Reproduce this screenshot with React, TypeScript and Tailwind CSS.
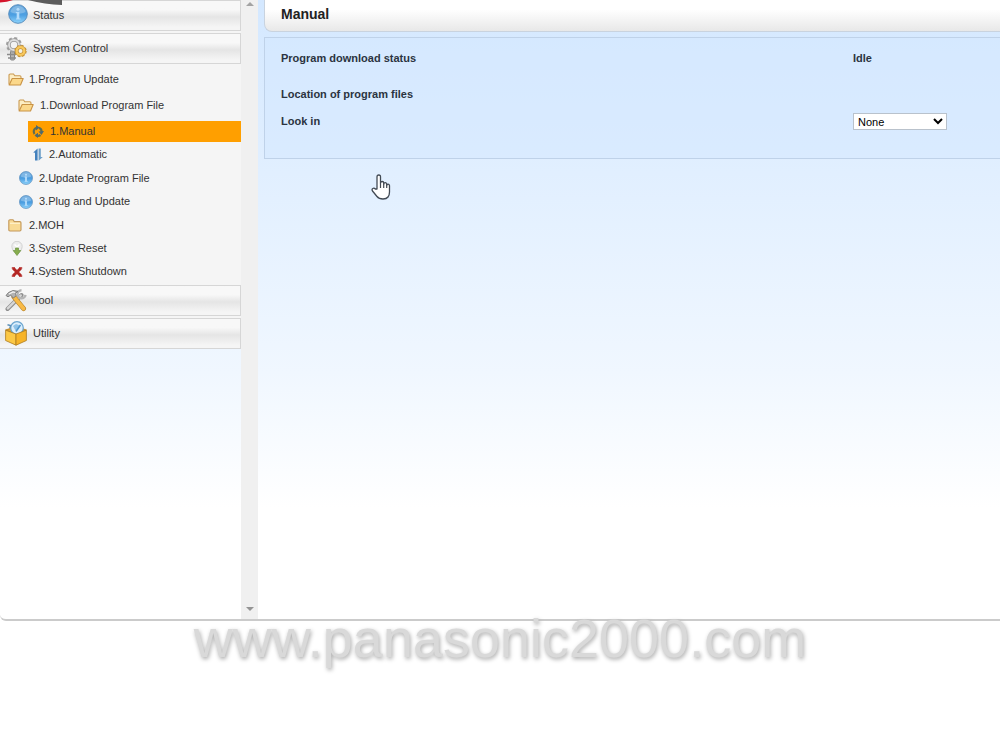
import type { ReactNode } from "react";

function InfoIcon({ id, className }: { id: string; className: string }) {
  return (
    <svg viewBox="0 0 20 20" className={className} aria-hidden="true">
      <defs>
        <linearGradient id={id} x1="0" y1="0" x2="0" y2="1">
          <stop offset="0" stopColor="#5b9fd8" />
          <stop offset="0.55" stopColor="#4c9fe2" />
          <stop offset="1" stopColor="#8fd4fb" />
        </linearGradient>
      </defs>
      <circle cx="10" cy="10" r="9.3" fill={`url(#${id})`} stroke="#5b8fbe" strokeWidth="1" />
      <path d="M2.5 8a7.6 7.6 0 0 1 15 0c-4 2-11 2-15 0z" fill="#fff" opacity="0.25" />
      <path d="M10 8v7" stroke="#b5dcfb" strokeWidth="2.6" fill="none" />
      <path d="M7.8 8.5h2M8 15h4.5" stroke="#b5dcfb" strokeWidth="1" />
      <circle cx="10" cy="5.3" r="1.5" fill="#b5dcfb" />
    </svg>
  );
}

function GearsIcon() {
  return (
    <svg viewBox="0 0 22 24" className="h-6 w-[22px]" aria-hidden="true">
      <rect x="5.5" y="14" width="4" height="9" rx="1" fill="#b5b5b5" stroke="#858585" />
      <path d="M2 17.5h9M3 21h8" stroke="#8b8b8b" strokeWidth="1.5" />
      <circle cx="9" cy="8" r="7" fill="none" stroke="#a0a0a0" strokeWidth="2" strokeDasharray="3 2.5" />
      <circle cx="9" cy="8" r="5" fill="#f3f3f3" stroke="#999" strokeWidth="3.4" />
      <circle cx="9" cy="8" r="5" fill="none" stroke="#dedede" strokeWidth="1.8" />
      <circle cx="15.5" cy="14" r="5.2" fill="none" stroke="#c2933f" strokeWidth="2" strokeDasharray="2.3 1.8" />
      <circle cx="15.5" cy="14" r="3.8" fill="#f2f0e5" stroke="#c99435" strokeWidth="3.6" />
      <circle cx="15.5" cy="14" r="3.8" fill="none" stroke="#f8c95e" strokeWidth="2.3" />
    </svg>
  );
}

function ToolIcon() {
  return (
    <svg viewBox="0 0 22 24" className="h-6 w-[22px]" aria-hidden="true">
      <path d="M2.5 20l14-14" stroke="#8d8d8d" strokeWidth="4" strokeLinecap="round" />
      <path d="M2.8 19.4l13-13" stroke="#d6d6d6" strokeWidth="2.4" strokeLinecap="round" />
      <path d="M20.5 5.8a4 4 0 1 1-4-4.5" fill="none" stroke="#b5b5b5" strokeWidth="2.4" />
      <path d="M9 8l9.5 11.5" stroke="#b9852a" strokeWidth="5" strokeLinecap="round" />
      <path d="M9 8l9.5 11.5" stroke="#f8ba47" strokeWidth="3.6" strokeLinecap="round" />
      <path d="M1 6.5L3.5 3.5 8 1.5l5 .8-2.6 2.2.8 2.3-3 2.3-2.4-3L3 7.8z" fill="#b3b3b3" stroke="#777" strokeWidth="0.9" />
      <path d="M4 5l4-2 2 .5" fill="none" stroke="#f5f5f5" strokeWidth="1.2" />
    </svg>
  );
}

function UtilityIcon() {
  return (
    <svg viewBox="0 0 22 26" className="h-[26px] w-[22px]" aria-hidden="true">
      <path d="M.6 9L11 5.5 21.4 9 11 13.5z" fill="#e0a02c" stroke="#ad7b1d" strokeWidth="0.8" />
      <circle cx="12" cy="7" r="6.3" fill="#dceefb" stroke="#6aa5cf" strokeWidth="1.2" />
      <path d="M8 5l3-2 4 1.5-1 3-3 3z" fill="#8fc3e8" />
      <path d="M11 10.5l4.5-6.5" stroke="#4f96cc" strokeWidth="1.5" />
      <path d="M2.5 3.8l3 .8-.7 2.6" fill="none" stroke="#5d91b8" strokeWidth="1.4" />
      <path d="M.6 9.2L11 13v11.2L.6 19.5z" fill="#fcc845" stroke="#ad7b1d" strokeWidth="0.8" />
      <path d="M21.4 9.2L11 13v11.2l10.4-4.7z" fill="#f7b428" stroke="#ad7b1d" strokeWidth="0.8" />
    </svg>
  );
}

function OpenFolderIcon() {
  return (
    <svg viewBox="0 0 16 13" className="h-[13px] w-4" aria-hidden="true">
      <path d="M1 11.5V2.2Q1 1 2.2 1h3.3l1.3 1.8h5Q13 2.8 13 4v2" fill="#fdeec4" stroke="#ca9a51" strokeWidth="1.1" />
      <path d="M1.2 12l3-6.5h11L12.5 12z" fill="#fbd88b" stroke="#c99345" strokeWidth="1.1" strokeLinejoin="round" />
    </svg>
  );
}

function FolderIcon() {
  return (
    <svg viewBox="0 0 14 13" className="h-[13px] w-3.5" aria-hidden="true">
      <path d="M.8 10.8V2Q.8.8 2 .8h3L6.3 2.6h5.4q1.3 0 1.3 1.2v7q0 1.2-1.2 1.2H2Q.8 12 .8 10.8z" fill="#f9da94" stroke="#c3985a" strokeWidth="1.1" />
      <path d="M2 4.3h10" stroke="#fff2cb" strokeWidth="1.2" />
    </svg>
  );
}

function ManualIcon() {
  return (
    <svg viewBox="0 0 12 13" className="h-[13px] w-3" aria-hidden="true">
      <path d="M2.5 9A4 4 0 0 1 4.5 2.8M7 2.8A4 4 0 0 1 9.5 7M8.5 10A4 4 0 0 1 4 10.2" fill="none" stroke="#5d6d52" strokeWidth="2.2" />
      <path d="M4 0l3.5 2.6L4 5.4zM12 6l-2.5 4-3-3.5zM6 7.8l-3.5 2.5L6 13z" fill="#4d6a70" />
    </svg>
  );
}

function AutomaticIcon() {
  return (
    <svg viewBox="0 0 10 13" className="h-[13px] w-2.5" aria-hidden="true">
      <path d="M.2 4.5L4.6.5v12H2V4.7z" fill="#4381bd" />
      <path d="M5.6.5h2.2V9h2l-4.2 3.7z" fill="#6d9fc9" />
    </svg>
  );
}

function ResetIcon() {
  return (
    <svg viewBox="0 0 12 15" className="h-[15px] w-3" aria-hidden="true">
      <path d="M3.5 11Q.8 8.5.8 5.5a5.2 5.2 0 0 1 10.4 0q0 3-2.7 5.5z" fill="#ededed" stroke="#d2d2d2" />
      <path d="M3.5 3.5L6 6l2.5-2.5" stroke="#fff" fill="none" strokeWidth="1.5" />
      <path d="M4.5 7h3v2.5h2.3L6 14.5 2.2 9.5h2.3z" fill="#86ad4d" stroke="#6b9440" strokeWidth="0.7" />
    </svg>
  );
}

function ShutdownIcon() {
  return (
    <svg viewBox="0 0 12 10" className="h-2.5 w-3" aria-hidden="true">
      <path d="M2.2 1.2l7.6 7.6M9.8 1.2L2.2 8.8" stroke="#b32623" strokeWidth="3" />
      <path d="M.8 1h3M8.2 1h3M.8 9h3M8.2 9h3" stroke="#b32623" strokeWidth="1.6" />
    </svg>
  );
}

function SectionButton({ icon, label }: { icon: ReactNode; label: string }) {
  return (
    <button
      type="button"
      className="flex h-[31px] w-full items-center gap-[5px] border border-l-0 border-[#d6d6d6] bg-linear-to-b from-[#f8f8f8] from-30% via-[#e5e5e5] via-55% to-[#f5f5f5] to-90% pl-1 text-left"
    >
      <span className="flex w-6 justify-center">{icon}</span>
      {label}
    </button>
  );
}

const treeItems = [
  { label: "1.Program Update", icon: <OpenFolderIcon />, row: "h-[26px] pl-2 gap-[5px]" },
  { label: "1.Download Program File", icon: <OpenFolderIcon />, row: "h-[26px] pl-[18px] gap-1.5" },
  { label: "1.Manual", icon: <ManualIcon />, row: "mt-[3px] mb-px ml-7 h-[21px] bg-[#ff9f00] pl-1 gap-1.5", current: true },
  { label: "2.Automatic", icon: <AutomaticIcon />, row: "h-[23px] pl-[33px] gap-1.5" },
  { label: "2.Update Program File", icon: <InfoIcon id="info-update" className="size-3.5" />, row: "h-6 pl-[19px] gap-1.5" },
  { label: "3.Plug and Update", icon: <InfoIcon id="info-plug" className="size-3.5" />, row: "h-[23px] pl-[19px] gap-1.5" },
  { label: "2.MOH", icon: <FolderIcon />, row: "h-6 pl-2 gap-[7px]" },
  { label: "3.System Reset", icon: <ResetIcon />, row: "h-[23px] pl-[11px] gap-1.5" },
  { label: "4.System Shutdown", icon: <ShutdownIcon />, row: "h-[23px] pl-[11px] gap-1.5" },
];

function Sidebar() {
  return (
    <nav className="w-[241px] shrink-0 text-[11px] text-[#333]">
      <div className="flex flex-col gap-0.5 bg-[#f5f5f5]">
        <SectionButton icon={<InfoIcon id="info-status" className="-mt-1 ml-1 size-5 shrink-0" />} label="Status" />
        <SectionButton icon={<GearsIcon />} label="System Control" />
        <ul>
          {treeItems.map((item) => (
            <li key={item.label}>
              <a href="#" aria-current={item.current ? "page" : undefined} className={`flex items-center ${item.row}`}>
                {item.icon}
                {item.label}
              </a>
            </li>
          ))}
        </ul>
        <SectionButton icon={<ToolIcon />} label="Tool" />
        <SectionButton icon={<UtilityIcon />} label="Utility" />
      </div>
    </nav>
  );
}

function ScrollTrack() {
  return (
    <div className="flex w-[17px] shrink-0 flex-col items-center justify-between bg-[#f0f0f0] pt-0.5 pb-2">
      <svg viewBox="0 0 8 4" className="h-1 w-2" aria-hidden="true">
        <path d="M4 0l4 4H0z" fill="#a3a3a3" />
      </svg>
      <svg viewBox="0 0 8 4" className="h-1 w-2" aria-hidden="true">
        <path d="M4 4L0 0h8z" fill="#949494" />
      </svg>
    </div>
  );
}

function ManualPanel() {
  return (
    <main className="min-w-0 flex-1 pl-1.5 text-[11px] font-bold text-[#2b3441]">
      <h1 className="h-8 rounded-bl-lg border-b border-l border-[#c9d3df] bg-linear-to-b from-white from-30% to-[#e8e8e8] pl-4 text-sm leading-7 text-[#222]">
        Manual
      </h1>
      <section className="mt-[5px] flex flex-col border border-r-0 border-[#bfd2e9] bg-[#d4e8ff]/50 px-4 pt-3 pb-7">
        <div className="flex h-4 items-center">
          <span className="flex-1">Program download status</span>
          <span className="w-[131px]">Idle</span>
        </div>
        <h2 className="mt-5 h-4 leading-4">Location of program files</h2>
        <div className="mt-[11px] flex h-[17px] items-center">
          <label htmlFor="look-in" className="flex-1">
            Look in
          </label>
          <div className="w-[131px]">
            <select
              id="look-in"
              className="block h-[17px] w-[94px] border border-[#b9c2cc] bg-white text-[11px] font-normal text-black"
            >
              <option>None</option>
            </select>
          </div>
        </div>
      </section>
    </main>
  );
}

export default function App() {
  return (
    <div className="relative min-h-screen bg-white font-['Liberation_Sans',Arial,sans-serif]">
      <div className="flex min-h-[621px] rounded-bl-md border-b-2 border-[#cbcbcb] bg-linear-to-b from-[#d4e8ff] via-[#f0f7ff] via-60% to-white to-82%">
        <Sidebar />
        <ScrollTrack />
        <ManualPanel />
      </div>
      <p className="absolute inset-x-0 top-[608px] text-center text-[54px] leading-[60px] text-[#d9d9d9] [text-shadow:1px_2px_4px_#aaa]">
        www.panasonic2000.com
      </p>
      <svg viewBox="0 0 64 6" className="absolute top-0 left-0 h-1.5 w-16" aria-hidden="true">
        <path d="M0 0h13Q7 2 0 2.5z" fill="#d5162d" />
        <path d="M28 0h34v5Q45 4.5 28 0z" fill="#5c5c5c" />
      </svg>
      <svg viewBox="0 0 20 26" className="absolute top-[174px] left-[371px] h-[26px] w-5" aria-hidden="true">
        <path
          d="M6 15V3q0-2 1.8-2t1.7 2v6q.2-1.500 1.700-1.500T12.700 9v1q.3-1.300 1.500-1.300t1.500 1.500v1q.3-1 1.400-1t1.400 1.400V18q0 3-1.500 5-1.500 2-5 2-4 0-6-2.500L1.500 17q-1-1.700.3-2.500t2.500.5z"
          fill="#fff"
          stroke="#424a54"
          strokeWidth="1.3"
          strokeLinejoin="round"
        />
        <path d="M9.5 9v5M12.7 10v4M15.7 11v3" stroke="#424a54" strokeWidth="1.2" />
      </svg>
    </div>
  );
}
